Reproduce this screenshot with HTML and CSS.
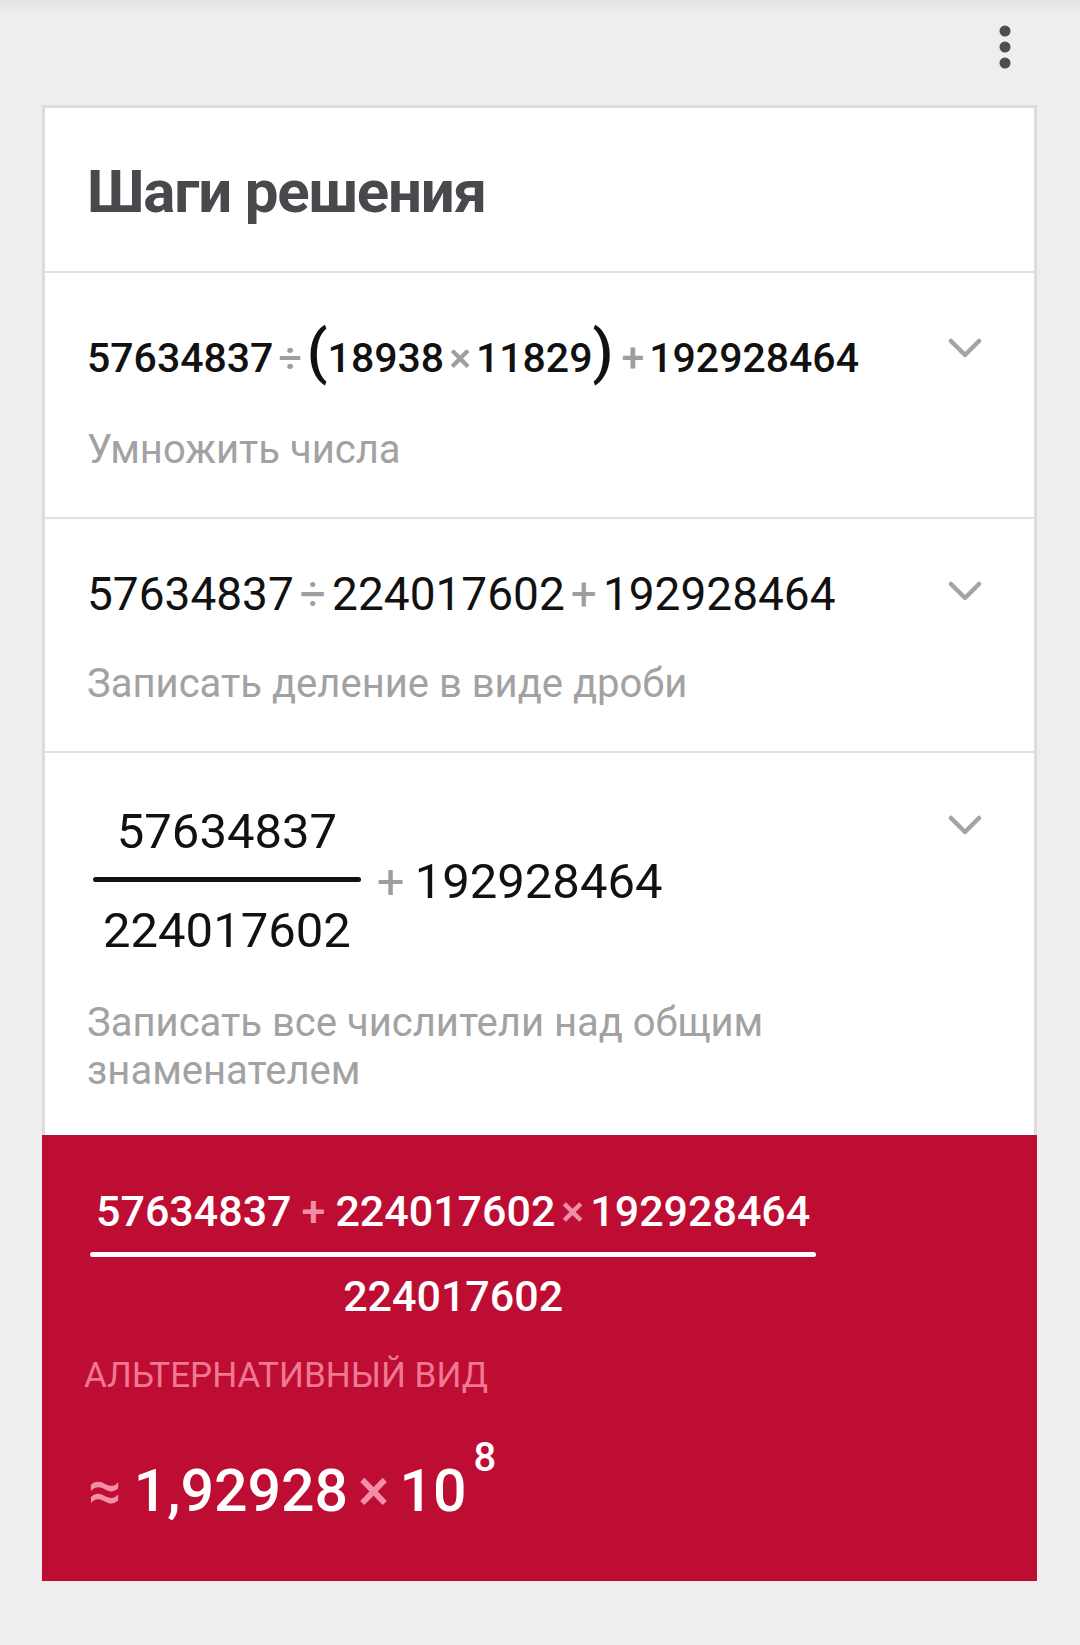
FILE: index.html
```html
<!DOCTYPE html>
<html lang="ru">

<head>
    <meta charset="UTF-8">
    <meta name="viewport" content="width=device-width, initial-scale=1.0">
    <title>Шаги решения</title>
    <link rel="stylesheet" href="styles.css">
</head>

<body>
    <div class="topbar">
        <svg class="menu" width="12" height="44" viewBox="0 0 12 44">
            <circle cx="6" cy="6" r="5.5" />
            <circle cx="6" cy="22" r="5.5" />
            <circle cx="6" cy="38" r="5.5" />
        </svg>
    </div>

    <div class="card">
        <div class="card-head">
            <h2>Шаги решения</h2>
        </div>

        <div class="step step-1">
            <div class="step-body">
                <div class="expr">57634837<span class="op">÷</span><span class="paren">(</span>18938<span class="op">×</span>11829<span class="paren paren-r">)</span><span class="op">+</span>192928464</div>
                <div class="hint">Умножить числа</div>
            </div>
            <svg class="chevron" width="34" height="20" viewBox="0 0 34 20"><polyline points="3,3 17,17 31,3" /></svg>
        </div>

        <div class="step step-2">
            <div class="step-body">
                <div class="expr">57634837<span class="op">÷</span>224017602<span class="op">+</span>192928464</div>
                <div class="hint">Записать деление в виде дроби</div>
            </div>
            <svg class="chevron" width="34" height="20" viewBox="0 0 34 20"><polyline points="3,3 17,17 31,3" /></svg>
        </div>

        <div class="step step-3">
            <div class="step-body">
                <div class="expr">
                    <div class="frac">
                        <span class="num">57634837</span>
                        <span class="bar"></span>
                        <span class="den">224017602</span>
                    </div>
                    <span class="op">+</span>192928464
                </div>
                <div class="hint">Записать все числители над общим знаменателем</div>
            </div>
            <svg class="chevron" width="34" height="20" viewBox="0 0 34 20"><polyline points="3,3 17,17 31,3" /></svg>
        </div>

        <div class="result">
            <div class="frac">
                <span class="num">57634837<span class="op">+</span>224017602<span class="op op-x">×</span>192928464</span>
                <span class="bar"></span>
                <span class="den">224017602</span>
            </div>
            <div class="alt-label">АЛЬТЕРНАТИВНЫЙ ВИД</div>
            <div class="approx"><span class="op">≈</span>1,92928<span class="op">×</span>10<sup>8</sup></div>
        </div>
    </div>
</body>

</html>
```

FILE: styles.css
```css
body,
h2 {
    padding: 0;
    margin: 0;
}

body {
    background: #eeeeee linear-gradient(#e2e2e2, #eeeeee 12px) no-repeat;
    font-family: Roboto, "Noto Sans", sans-serif;
    color: #111;
}

.topbar {
    height: 105px;
    box-sizing: border-box;
    padding: 25px 69px 0 0;
    display: flex;
    justify-content: flex-end;
    align-items: flex-start;
}

.menu {
    fill: #4d4d52;
}

.card {
    width: 995px;
    margin-left: 42px;
}

.card-head {
    background: #fff;
    border: 3px solid #dcdcdc;
    border-bottom: none;
    padding: 48px 42px 43px;
}

.card-head h2 {
    font-size: 60px;
    line-height: 72px;
    font-weight: bold;
    letter-spacing: -1.2px;
    color: #48484d;
}

.step {
    display: flex;
    align-items: flex-start;
    background: #fff;
    border: 3px solid #dcdcdc;
    border-bottom: none;
    border-top: 2px solid #e0e0e0;
}

.step-body {
    flex: 1;
    padding-left: 42px;
}

.chevron {
    flex: none;
    margin: 62px 52px 0 40px;
    fill: none;
    stroke: #a4a4a4;
    stroke-width: 4.5;
    stroke-linecap: round;
    stroke-linejoin: round;
}

.expr {
    white-space: nowrap;
}

.op {
    color: #9e9e9e;
    margin: 0 5px;
}

.paren {
    font-size: 60px;
    line-height: 0;
    font-weight: 500;
}

.paren-r {
    margin-right: 3px;
}

.hint {
    font-size: 40px;
    line-height: 48px;
    color: #a2a2a2;
    padding-bottom: 43px;
    max-width: 760px;
}

.step-1 .step-body {
    padding-top: 61px;
}

.step-1 .chevron {
    margin-top: 65px;
}

.step-1 .expr {
    font-size: 41px;
    line-height: 48px;
    font-weight: 500;
}

.step-1 .hint {
    margin-top: 44px;
}

.step-2 .step-body {
    padding-top: 49px;
}

.step-2 .expr {
    font-size: 46px;
    line-height: 53px;
}

.step-2 .op {
    margin: 0 6px;
}

.step-2 .hint {
    margin-top: 39px;
}

.step-3 .step-body {
    padding-top: 54px;
}

.step-3 .expr {
    display: flex;
    align-items: center;
    font-size: 49px;
    line-height: 49px;
}

.step-3 .hint {
    margin-top: 44px;
    padding-bottom: 40px;
}

.frac {
    display: inline-flex;
    flex-direction: column;
    align-items: center;
    margin-left: 6px;
}

.frac .num,
.frac .den {
    padding: 0 10px;
}

.frac .bar {
    align-self: stretch;
    height: 5px;
    border-radius: 3px;
    background: #111;
}

.step-3 .frac .bar {
    margin: 21px 0 24px;
}

.step-3 .op {
    margin: 0 10px 0 16px;
}

.result {
    background: #bd0d33;
    border-top: 1px solid #a81c3a;
    color: #fff;
    padding: 54px 42px 35px;
}

.result .frac {
    display: flex;
    width: max-content;
    margin-left: 6px;
    font-size: 43px;
    line-height: 43px;
    font-weight: 500;
}

.result .frac .bar {
    background: #fff;
    margin: 19px 0 18px;
}

.result .frac .num {
    padding: 0 6px;
}

.result .op {
    color: #f28ea6;
    margin: 0 10px;
}

.result .op-x {
    margin: 0 6px;
}

.alt-label {
    margin-top: 38px;
    font-size: 35px;
    line-height: 40px;
    color: #f07892;
}

.approx {
    margin-top: 40px;
    font-size: 59px;
    line-height: 110px;
    font-weight: 500;
}

.approx .op:first-child {
    margin: 0 12px 0 4px;
}

.approx sup {
    font-size: 40px;
    line-height: 40px;
    vertical-align: 40px;
    margin-left: 7px;
}
```
